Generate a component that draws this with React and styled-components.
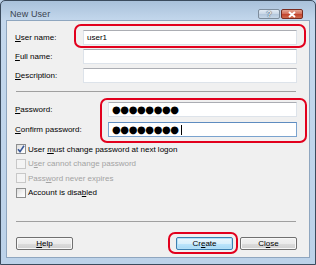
import React from 'react';
import styled, { createGlobalStyle } from 'styled-components';

const GlobalStyle = createGlobalStyle`
  html, body {
    margin: 0;
    padding: 0;
    background: #bcd2e9;
  }
  * {
    box-sizing: border-box;
  }
`;

const red = '#e2001d';

const App = () => {
  return (
    <>
      <GlobalStyle />
      <Window>
        <TitleBar>
          <Title>New User</Title>
          <Caption>
            <CapButton>?</CapButton>
            <CapButton close>
              <svg width="10" height="7" viewBox="0 0 10 7">
                <path d="M2 1 L8 6 M8 1 L2 6" stroke="#fff" strokeWidth="2" />
              </svg>
            </CapButton>
          </Caption>
        </TitleBar>

        <Content>
          <Fields labelWidth={68}>
            <Row>
              <Label><u>U</u>ser name:</Label>
              <Input>user1</Input>
            </Row>
            <Row>
              <Label><u>F</u>ull name:</Label>
              <Input />
            </Row>
            <Row>
              <Label><u>D</u>escription:</Label>
              <Input />
            </Row>
          </Fields>

          <Separator top={4} />

          <Fields labelWidth={93} top={10}>
            <Row gap={5}>
              <Label><u>P</u>assword:</Label>
              <Input>
                <Dots>●●●●●●●●</Dots>
              </Input>
            </Row>
            <Row gap={5}>
              <Label><u>C</u>onfirm password:</Label>
              <Input focused>
                <Dots>●●●●●●●●</Dots>
                <Caret />
              </Input>
            </Row>
          </Fields>

          <Checks>
            <Check>
              <Box checked>
                <svg width="8" height="8" viewBox="0 0 8 8">
                  <path d="M1 4.2 L3 6.6 L7 0.8" stroke="#3a5a9a" strokeWidth="1.6" fill="none" />
                </svg>
              </Box>
              <CheckText>User <u>m</u>ust change password at next logon</CheckText>
            </Check>
            <Check>
              <Box disabled />
              <CheckText disabled>U<u>s</u>er cannot change password</CheckText>
            </Check>
            <Check>
              <Box disabled />
              <CheckText disabled>Pass<u>w</u>ord never expires</CheckText>
            </Check>
            <Check>
              <Box />
              <CheckText>Account is disa<u>b</u>led</CheckText>
            </Check>
          </Checks>

          <Footer>
            <Separator top={0} />
            <Buttons>
              <Button><u>H</u>elp</Button>
              <RightButtons>
                <Button primary>Cr<u>e</u>ate</Button>
                <Button>Cl<u>o</u>se</Button>
              </RightButtons>
            </Buttons>
          </Footer>

          <Highlight style={{ left: 67, top: 3, width: 232, height: 24 }} />
          <Highlight style={{ left: 93, top: 77, width: 207, height: 45 }} />
          <Highlight style={{ left: 161, top: 211, width: 70, height: 22 }} />
        </Content>
      </Window>
    </>
  );
};

export default App;

const Window = styled.div`
  width: 316px;
  height: 265px;
  border: 1px solid #3b4b5d;
  border-radius: 5px 5px 0 0;
  background: linear-gradient(to bottom, #a9c1da 0px, #c4d8ed 20px, #bcd2e9 100%);
  display: flex;
  flex-direction: column;
  padding: 0 6px 7px 6px;
  font-family: 'Liberation Sans', Arial, sans-serif;
`;

const TitleBar = styled.div`
  height: 20px;
  display: flex;
  align-items: flex-start;
  justify-content: space-between;
  padding: 0 0 0 3px;
`;

const Title = styled.div`
  margin-top: 8px;
  font-size: 9px;
  line-height: 10px;
  color: #3a4450;
  letter-spacing: 0.1px;
`;

const Caption = styled.div`
  display: flex;
  gap: 1px;
  margin-top: 8px;
  margin-right: 6px;
`;

const CapButton = styled.div`
  width: 22px;
  height: 10px;
  border: 1px solid ${(p) => (p.close ? '#7a2c20' : '#7d8c9c')};
  border-radius: 2px;
  background: ${(p) =>
    p.close
      ? 'linear-gradient(to bottom, #e3a593 0%, #d36a55 50%, #c1412b 51%, #cf6a4e 100%)'
      : 'linear-gradient(to bottom, #e3ebf4 0%, #c8d6e6 50%, #b3c6db 51%, #c7d7e8 100%)'};
  display: flex;
  align-items: center;
  justify-content: center;
  font-size: 9px;
  font-weight: bold;
  line-height: 1;
  color: #e8eef4;
  text-shadow: 0 0 1px #3e4e60, 0 0 1px #3e4e60;
`;

const Content = styled.div`
  position: relative;
  flex: 1;
  background: #f0f0f0;
  box-shadow: 0 0 0 1px #8fa6bf;
  display: flex;
  flex-direction: column;
  padding: 9px 12px 7px 8px;
  color: #000;
  font-size: 8px;
`;

const Fields = styled.div`
  display: grid;
  grid-template-columns: ${(p) => p.labelWidth}px 1fr;
  margin-top: ${(p) => p.top || 0}px;
`;

const Row = styled.div`
  display: contents;
  & > * {
    margin-bottom: ${(p) => p.gap || 4}px;
  }
`;

const Label = styled.div`
  height: 15px;
  display: flex;
  align-items: center;
  white-space: nowrap;
  & u {
    text-underline-offset: 1px;
  }
`;

const Input = styled.div`
  height: 15px;
  background: #fff;
  border: 1px solid ${(p) => (p.focused ? '#7aa3cf' : '#dde3ea')};
  border-top-color: ${(p) => (p.focused ? '#5e8cc0' : '#abadb3')};
  display: flex;
  align-items: center;
  padding-left: 3px;
  font-size: 8px;
`;

const Dots = styled.span`
  font-family: 'DejaVu Sans', sans-serif;
  font-size: 10px;
  letter-spacing: -0.4px;
  line-height: 1;
`;

const Caret = styled.span`
  width: 1px;
  height: 10px;
  background: #000;
  margin-left: 2px;
`;

const Separator = styled.div`
  height: 1px;
  background: #a0a0a0;
  margin: ${(p) => p.top}px 1px 0 1px;
`;

const Checks = styled.div`
  display: flex;
  flex-direction: column;
`;

const Check = styled.div`
  height: 14.5px;
  display: flex;
  align-items: center;
  gap: 2px;
  padding-left: 1px;
`;

const Box = styled.div`
  width: 10px;
  height: 10px;
  border: 1px solid ${(p) => (p.disabled ? '#c8c8c8' : '#8e8f8f')};
  background: ${(p) =>
    p.disabled
      ? '#f4f4f4'
      : 'linear-gradient(135deg, #dcdcdc 0%, #f6f6f6 60%, #ffffff 100%)'};
  display: flex;
  align-items: center;
  justify-content: center;
`;

const CheckText = styled.span`
  color: ${(p) => (p.disabled ? '#a3a3a3' : '#000')};
  white-space: nowrap;
`;

const Footer = styled.div`
  margin-top: auto;
  display: flex;
  flex-direction: column;
`;

const Buttons = styled.div`
  display: flex;
  justify-content: space-between;
  margin-top: 15px;
  padding-left: 1px;
`;

const RightButtons = styled.div`
  display: flex;
  gap: 7px;
`;

const Button = styled.div`
  width: 57px;
  height: 13px;
  border: 1px solid ${(p) => (p.primary ? '#3c7fb1' : '#707070')};
  border-radius: 2px;
  background: ${(p) =>
    p.primary
      ? 'linear-gradient(to bottom, #eaf6fd 0%, #d9f0fc 50%, #bee6fd 51%, #a7d9f5 100%)'
      : 'linear-gradient(to bottom, #f2f2f2 0%, #ebebeb 50%, #dddddd 51%, #cfcfcf 100%)'};
  box-shadow: inset 0 0 0 1px ${(p) => (p.primary ? '#b5e0f7' : '#f8f8f8')};
  display: flex;
  align-items: center;
  justify-content: center;
  font-size: 8px;
`;

const Highlight = styled.div`
  position: absolute;
  border: 2px solid ${red};
  border-radius: 7px;
  pointer-events: none;
`;
